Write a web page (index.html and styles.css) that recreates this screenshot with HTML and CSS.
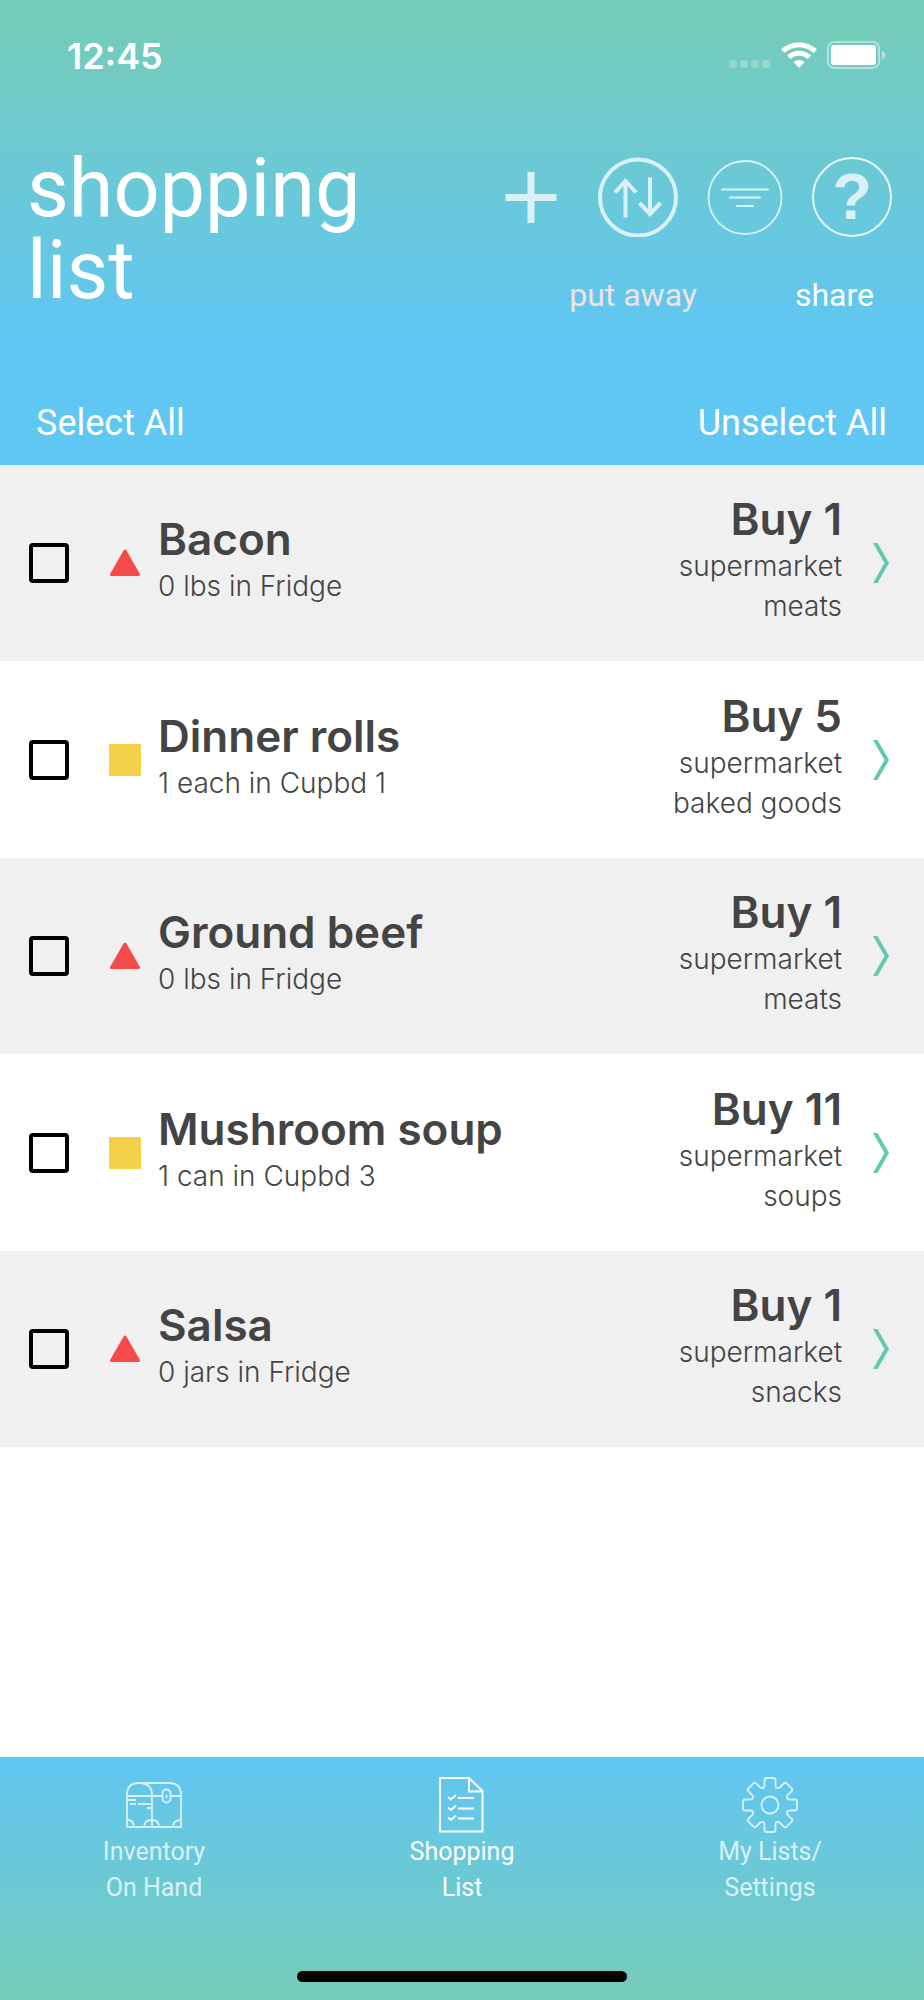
FILE: index.html
```html
<!DOCTYPE html>
<html lang="en">
<head>
    <meta charset="UTF-8">
    <meta name="viewport" content="width=device-width, initial-scale=1.0">
    <title>Shopping List</title>
    <link rel="stylesheet" href="styles.css">
</head>
<body>
    <header class="header">
        <div class="status-bar">
            <span class="time">12:45</span>
            <div class="status-icons">
                <svg width="42" height="28" viewBox="0 0 42 28" fill="#fff" opacity="0.25">
                    <rect x="0" y="19" width="8" height="8" rx="3"/>
                    <rect x="11" y="19" width="8" height="8" rx="3"/>
                    <rect x="22" y="19" width="8" height="8" rx="3"/>
                    <rect x="33" y="19" width="8" height="8" rx="3"/>
                </svg>
                <svg width="36" height="28" viewBox="0 0 36 28" fill="#fff">
                    <path d="M0 8.500A26 26 0 0 1 36 8.500L32.500 12A21 21 0 0 0 3.500 12Z"/>
                    <path d="M6 14.500A17.500 17.500 0 0 1 30 14.500L26.500 18A12.500 12.500 0 0 0 9.500 18Z"/>
                    <path d="M12.500 21A8.500 8.500 0 0 1 23.500 21L18 27Z"/>
                </svg>
                <svg width="60" height="28" viewBox="0 0 60 28">
                    <rect x="1" y="1" width="51" height="26" rx="6" fill="none" stroke="#fff" stroke-width="2" opacity="0.45"/>
                    <rect x="4" y="4" width="45" height="20" rx="3" fill="#fff"/>
                    <path d="M55 9.500Q62 14 55 18.500Z" fill="#fff" opacity="0.5"/>
                </svg>
            </div>
        </div>

        <div class="title-row">
            <h1>shopping<br>list</h1>
            <div class="tools">
                <div class="icon-row">
                    <button type="button" class="icon-btn" aria-label="Add item">
                        <svg viewBox="0 0 80 80" stroke-width="7">
                            <path d="M40 15V66M14.500 40.500H65.500"/>
                        </svg>
                    </button>
                    <button type="button" class="icon-btn" aria-label="Sort">
                        <svg viewBox="0 0 80 80" stroke-width="4">
                            <circle cx="40" cy="40.500" r="38"/>
                            <path d="M27.500 60.500V24M17 35.500L27.500 24L38 35.500M52 20.500V57M41.500 46L52 57L62.500 46"/>
                        </svg>
                    </button>
                    <button type="button" class="icon-btn" aria-label="Filter">
                        <svg viewBox="0 0 80 80" stroke-width="1.800" stroke-linecap="round">
                            <circle cx="40" cy="40.500" r="36.500"/>
                            <path d="M17 32.500H63M25 40.500H55M32 49H48" stroke-width="2"/>
                        </svg>
                    </button>
                    <button type="button" class="icon-btn help" aria-label="Help">?</button>
                </div>
                <div class="link-row">
                    <button type="button" class="text-btn muted">put away</button>
                    <button type="button" class="text-btn">share</button>
                </div>
            </div>
        </div>

        <div class="select-row">
            <button type="button" class="select-btn">Select All</button>
            <button type="button" class="select-btn">Unselect All</button>
        </div>
    </header>

    <main>
        <ul class="items">
            <li class="item">
                <input type="checkbox" id="bacon">
                <svg class="marker" viewBox="0 0 32 32"><path d="M16 4L29.500 27.500H2.500Z" fill="#f44a4a" stroke="#f44a4a" stroke-width="3" stroke-linejoin="round"/></svg>
                <div class="info">
                    <label class="name" for="bacon">Bacon</label>
                    <p>0 lbs in Fridge</p>
                </div>
                <div class="buy">
                    <strong>Buy 1</strong>
                    <p>supermarket</p>
                    <p>meats</p>
                </div>
                <a class="chevron" href="#bacon" aria-label="Bacon details"><svg viewBox="0 0 16 40"><path d="M0 0H4.500L16 20L4.500 40H0L11.500 20Z"/></svg></a>
            </li>
            <li class="item">
                <input type="checkbox" id="rolls">
                <svg class="marker" viewBox="0 0 32 32"><rect width="32" height="32" rx="1" fill="#f2d04a"/></svg>
                <div class="info">
                    <label class="name" for="rolls">Dinner rolls</label>
                    <p>1 each in Cupbd 1</p>
                </div>
                <div class="buy">
                    <strong>Buy 5</strong>
                    <p>supermarket</p>
                    <p>baked goods</p>
                </div>
                <a class="chevron" href="#rolls" aria-label="Dinner rolls details"><svg viewBox="0 0 16 40"><path d="M0 0H4.500L16 20L4.500 40H0L11.500 20Z"/></svg></a>
            </li>
            <li class="item">
                <input type="checkbox" id="beef">
                <svg class="marker" viewBox="0 0 32 32"><path d="M16 4L29.500 27.500H2.500Z" fill="#f44a4a" stroke="#f44a4a" stroke-width="3" stroke-linejoin="round"/></svg>
                <div class="info">
                    <label class="name" for="beef">Ground beef</label>
                    <p>0 lbs in Fridge</p>
                </div>
                <div class="buy">
                    <strong>Buy 1</strong>
                    <p>supermarket</p>
                    <p>meats</p>
                </div>
                <a class="chevron" href="#beef" aria-label="Ground beef details"><svg viewBox="0 0 16 40"><path d="M0 0H4.500L16 20L4.500 40H0L11.500 20Z"/></svg></a>
            </li>
            <li class="item">
                <input type="checkbox" id="soup">
                <svg class="marker" viewBox="0 0 32 32"><rect width="32" height="32" rx="1" fill="#f2d04a"/></svg>
                <div class="info">
                    <label class="name" for="soup">Mushroom soup</label>
                    <p>1 can in Cupbd 3</p>
                </div>
                <div class="buy">
                    <strong>Buy 11</strong>
                    <p>supermarket</p>
                    <p>soups</p>
                </div>
                <a class="chevron" href="#soup" aria-label="Mushroom soup details"><svg viewBox="0 0 16 40"><path d="M0 0H4.500L16 20L4.500 40H0L11.500 20Z"/></svg></a>
            </li>
            <li class="item">
                <input type="checkbox" id="salsa">
                <svg class="marker" viewBox="0 0 32 32"><path d="M16 4L29.500 27.500H2.500Z" fill="#f44a4a" stroke="#f44a4a" stroke-width="3" stroke-linejoin="round"/></svg>
                <div class="info">
                    <label class="name" for="salsa">Salsa</label>
                    <p>0 jars in Fridge</p>
                </div>
                <div class="buy">
                    <strong>Buy 1</strong>
                    <p>supermarket</p>
                    <p>snacks</p>
                </div>
                <a class="chevron" href="#salsa" aria-label="Salsa details"><svg viewBox="0 0 16 40"><path d="M0 0H4.500L16 20L4.500 40H0L11.500 20Z"/></svg></a>
            </li>
        </ul>
    </main>

    <footer class="tab-bar">
        <nav class="tabs">
            <a class="tab" href="#inventory">
                <svg viewBox="0 0 56 56" stroke-width="1.800">
                    <path d="M1 50V18Q1 6 13 6Q26 6 26 18V50M13 6H43Q55 6 55 18V50H1M1 19H36M45 19H55"/>
                    <path d="M1 43Q8 43 8 50M18 50Q18 43 26 43Q33 43 33 50M47 50Q47 43 55 43"/>
                    <rect x="36.500" y="12.500" width="8" height="13" rx="4"/>
                    <path d="M40.500 18V21M2 23H10M4 27H10M12 27H26M21 31H26"/>
                </svg>
                Inventory<br>On Hand
            </a>
            <a class="tab active" href="#shopping">
                <svg viewBox="0 0 56 56" stroke-width="2">
                    <path d="M6 1H35L48.500 14V54.500H6ZM35 1V14.500H48.500"/>
                    <path d="M14 20L17 22.500L22 18M14 30.500L17 33L22 28.500M14 40.500L17 43L22 38.500M24 21H40M24 31.500H40M24 41.500H40"/>
                </svg>
                Shopping<br>List
            </a>
            <a class="tab" href="#settings">
                <svg viewBox="-28 -28 56 56" stroke-width="1.800">
                    <defs>
                        <path id="teeth" d="M-5.500 -25Q-5.500 -27 -3.500 -27H3.500Q5.500 -27 5.500 -25V-20C5.500 -16.500 8 -16 10.250 -18L13.800 -21.600Q15.200 -23 16.600 -21.600L21.600 -16.600Q23 -15.200 21.600 -13.800L18 -10.250C16 -8 16.500 -5.500 20 -5.500H25"/>
                    </defs>
                    <use href="#teeth"/>
                    <use href="#teeth" transform="rotate(90)"/>
                    <use href="#teeth" transform="rotate(180)"/>
                    <use href="#teeth" transform="rotate(270)"/>
                    <circle r="8.500"/>
                </svg>
                My Lists/<br>Settings
            </a>
        </nav>
        <div class="home-indicator"></div>
    </footer>
</body>
</html>
```
FILE: styles.css
```css
* {
    margin: 0;
    padding: 0;
    box-sizing: border-box;
}

body {
    display: flex;
    flex-direction: column;
    min-height: 100vh;
    background-color: #fff;
    font-family: Roboto, sans-serif;
    color: #444;
}

button {
    background: none;
    border: none;
    color: #fff;
    font-family: inherit;
    cursor: pointer;
}

svg {
    display: block;
}

/* header */
.header {
    background: linear-gradient(#76ccb6, #60c6f2 72%);
    color: #fff;
    padding-bottom: 18px;
}

.status-bar {
    display: flex;
    justify-content: space-between;
    padding: 32px 37px 0 67px;
    height: 148px;
}

.time {
    font-family: Inter, sans-serif;
    font-size: 36px;
    font-weight: 600;
    line-height: 48px;
}

.status-icons {
    display: flex;
    gap: 10px;
    padding-top: 9px;
}

.title-row {
    display: flex;
    justify-content: space-between;
    padding: 0 32px 0 27px;
}

h1 {
    font-size: 81px;
    font-weight: 400;
    line-height: 82px;
}

.tools {
    padding-top: 9px;
}

.icon-row {
    display: flex;
    gap: 27px;
}

.icon-btn {
    width: 80px;
    height: 80px;
}

.icon-btn svg {
    fill: none;
    stroke: #d8f1f7;
}

.icon-btn.help {
    border: 2px solid #e6f6fa;
    border-radius: 50%;
    color: #d8f1f7;
    font-family: "Liberation Sans", sans-serif;
    font-size: 65px;
    font-weight: 700;
    line-height: 76px;
}

.link-row {
    display: flex;
    justify-content: flex-end;
    gap: 98px;
    padding: 38px 18px 0 0;
}

.text-btn {
    font-size: 32px;
    line-height: 40px;
}

.text-btn.muted {
    color: #f0e2e0;
}

.select-row {
    display: flex;
    justify-content: space-between;
    padding: 84px 37px 0 36px;
}

.select-btn {
    font-size: 36px;
    line-height: 48px;
}

/* list */
main {
    flex: 1;
}

.items {
    list-style: none;
}

.item {
    display: flex;
    align-items: center;
    min-height: 196px;
    padding: 0 35px 0 29px;
}

.item:nth-child(odd) {
    background-color: #f0f0f0;
}

.item:nth-child(even) {
    min-height: 197px;
}

.item input {
    appearance: none;
    width: 40px;
    height: 40px;
    border: 4px solid #000;
    border-radius: 4px;
}

.item input:checked {
    background-color: #75ccb6;
}

.marker {
    width: 32px;
    height: 32px;
    margin: 0 17px 0 40px;
}

.info,
.buy {
    padding-bottom: 5px;
}

.info {
    flex: 1;
}

.buy {
    text-align: right;
}

.name,
.buy strong {
    display: block;
    margin-bottom: 3px;
    font-family: Inter, sans-serif;
    font-size: 44px;
    font-weight: 600;
    line-height: 48px;
}

.item p {
    font-family: Inter, sans-serif;
    font-size: 28px;
    font-weight: 300;
    line-height: 40px;
}

.chevron {
    width: 16px;
    margin-left: 31px;
}

.chevron svg {
    fill: #62c8b0;
}

/* bottom bar */
.tab-bar {
    background: linear-gradient(#60c6f3, #76ccb6);
    padding: 20px 0 18px;
}

.tabs {
    display: grid;
    grid-template-columns: repeat(3, 1fr);
}

.tab {
    color: #d8f1f7;
    font-size: 25px;
    line-height: 36px;
    text-align: center;
    text-decoration: none;
}

.tab svg {
    width: 56px;
    height: 56px;
    margin: 0 auto 1px;
    fill: none;
    stroke: currentColor;
}

.tab.active {
    color: #fff;
}

.home-indicator {
    width: 330px;
    height: 11px;
    margin: 65px auto 0;
    border-radius: 6px;
    background-color: #000;
}
```
